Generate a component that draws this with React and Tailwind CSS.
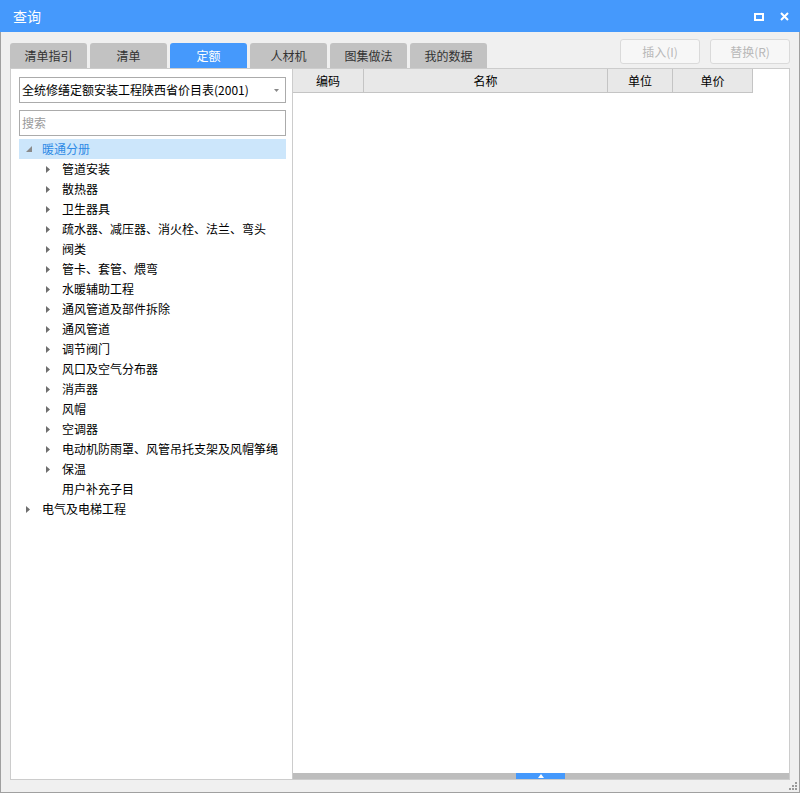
import React from "react";

const font = { fontFamily: '"Noto Sans CJK SC", "Microsoft YaHei", sans-serif' };

const tabs = ["清单指引", "清单", "定额", "人材机", "图集做法", "我的数据"];

const children = [
  "管道安装",
  "散热器",
  "卫生器具",
  "疏水器、减压器、消火栓、法兰、弯头",
  "阀类",
  "管卡、套管、煨弯",
  "水暖辅助工程",
  "通风管道及部件拆除",
  "通风管道",
  "调节阀门",
  "风口及空气分布器",
  "消声器",
  "风帽",
  "空调器",
  "电动机防雨罩、风管吊托支架及风帽筝绳",
  "保温",
];

function RightTri() {
  return (
    <svg width="4" height="7" viewBox="0 0 4 7" className="block">
      <path d="M0 0 L4 3.5 L0 7 Z" fill="#6e6e6e" />
    </svg>
  );
}

function ExpTri() {
  return (
    <svg width="6" height="6" viewBox="0 0 6 6" className="block">
      <path d="M6 0 L6 6 L0 6 Z" fill="#8a8a8a" />
    </svg>
  );
}

export default function App() {
  return (
    <div className="w-[800px] h-[793px] flex flex-col overflow-hidden" style={font}>
      {/* title bar */}
      <div className="h-[32px] bg-[#4599fc] flex items-center pl-[13px] pr-[11px] relative">
        <span className="text-white text-[14px] leading-none">查询</span>
        <div className="ml-auto flex items-center gap-[16px]">
          <div className="w-[10px] h-[8px] border-[2px] border-white mt-[1px]" />
          <svg width="9" height="9" viewBox="0 0 9 9" className="block mt-[1px]">
            <path d="M1 1 L8 8 M8 1 L1 8" stroke="white" strokeWidth="2" />
          </svg>
        </div>
      </div>

      {/* body */}
      <div className="flex-1 bg-[#f0f0f0] border-x border-b border-[#a0a0a0] pt-[7px] pl-[9px] pr-[9px] pb-[12px] flex flex-col relative">
        {/* tab row */}
        <div className="h-[29px] flex items-end">
          <div className="flex items-end gap-[3px]">
            {tabs.map((t, i) => (
              <div
                key={t}
                className={
                  "w-[77px] h-[25px] rounded-t-[3px] flex items-center justify-center text-[12px] " +
                  (i === 2 ? "bg-[#4599fc] text-white" : "bg-[#c2c2c2] text-[#333]")
                }
              >
                {t}
              </div>
            ))}
          </div>
          <div className="ml-auto self-start flex gap-[10px]">
            <div className="w-[80px] h-[25px] rounded-[3px] border border-[#dadada] bg-[#f7f7f7] text-[#b8b8b8] text-[12px] flex items-center justify-center">
              插入(I)
            </div>
            <div className="w-[80px] h-[25px] rounded-[3px] border border-[#dadada] bg-[#f7f7f7] text-[#b8b8b8] text-[12px] flex items-center justify-center">
              替换(R)
            </div>
          </div>
        </div>

        {/* content */}
        <div className="flex-1 flex min-h-0">
          {/* left panel */}
          <div className="w-[283px] bg-white border border-[#cccccc] flex flex-col pt-[8px] pl-[8px] pr-[6px]">
            <div className="h-[26px] border border-[#ababab] flex items-center pl-[2px] pr-[6px] text-[12px] text-black">
              <span>全统修缮定额安装工程陕西省价目表(2001)</span>
              <svg width="5" height="3" viewBox="0 0 5 3" className="ml-auto block">
                <path d="M0 0 L5 0 L2.5 3 Z" fill="#888" />
              </svg>
            </div>
            <div className="h-[26px] mt-[7px] border border-[#ababab] flex items-center pl-[2px] text-[12px] text-[#9a9a9a]">
              搜索
            </div>
            <div className="mt-[3px] flex flex-col text-[12px] text-black">
              <div className="h-[20px] bg-[#cce6fb] flex items-center">
                <div className="w-[23px] flex justify-end pr-[10px]">
                  <ExpTri />
                </div>
                <span className="text-[#2f8be6]">暖通分册</span>
              </div>
              {children.map((c) => (
                <div key={c} className="h-[20px] flex items-center">
                  <div className="w-[43px] flex justify-end pr-[12px]">
                    <RightTri />
                  </div>
                  <span>{c}</span>
                </div>
              ))}
              <div className="h-[20px] flex items-center pl-[43px]">
                <span>用户补充子目</span>
              </div>
              <div className="h-[20px] flex items-center">
                <div className="w-[23px] flex justify-end pr-[12px]">
                  <RightTri />
                </div>
                <span>电气及电梯工程</span>
              </div>
            </div>
          </div>

          {/* right panel */}
          <div className="flex-1 bg-white border-y border-r border-[#cccccc] flex flex-col">
            <div className="flex h-[24px] text-[12px] text-black">
              <div className="w-[71px] bg-[#e8e8e8] border-b border-r border-[#c4c4c4] flex items-center justify-center">编码</div>
              <div className="w-[244px] bg-[#e8e8e8] border-b border-r border-[#c4c4c4] flex items-center justify-center">名称</div>
              <div className="w-[65px] bg-[#e8e8e8] border-b border-r border-[#c4c4c4] flex items-center justify-center">单位</div>
              <div className="w-[80px] bg-[#e8e8e8] border-b border-r border-[#c4c4c4] flex items-center justify-center">单价</div>
            </div>
            <div className="flex-1" />
            <div className="h-[6px] bg-[#bdbdbd] flex">
              <div className="ml-[223px] w-[49px] h-[6px] bg-[#4599fc] flex items-center justify-center">
                <svg width="6" height="4" viewBox="0 0 6 4" className="block">
                  <path d="M3 0 L6 4 L0 4 Z" fill="white" />
                </svg>
              </div>
            </div>
          </div>
        </div>

        {/* resize grip */}
        <svg width="8" height="8" viewBox="0 0 8 8" className="absolute right-[2px] bottom-[2px] block">
          <rect x="6" y="0" width="2" height="2" fill="#9a9a9a" />
          <rect x="3" y="3" width="2" height="2" fill="#9a9a9a" />
          <rect x="6" y="3" width="2" height="2" fill="#9a9a9a" />
          <rect x="0" y="6" width="2" height="2" fill="#9a9a9a" />
          <rect x="3" y="6" width="2" height="2" fill="#9a9a9a" />
          <rect x="6" y="6" width="2" height="2" fill="#9a9a9a" />
        </svg>
      </div>
    </div>
  );
}
